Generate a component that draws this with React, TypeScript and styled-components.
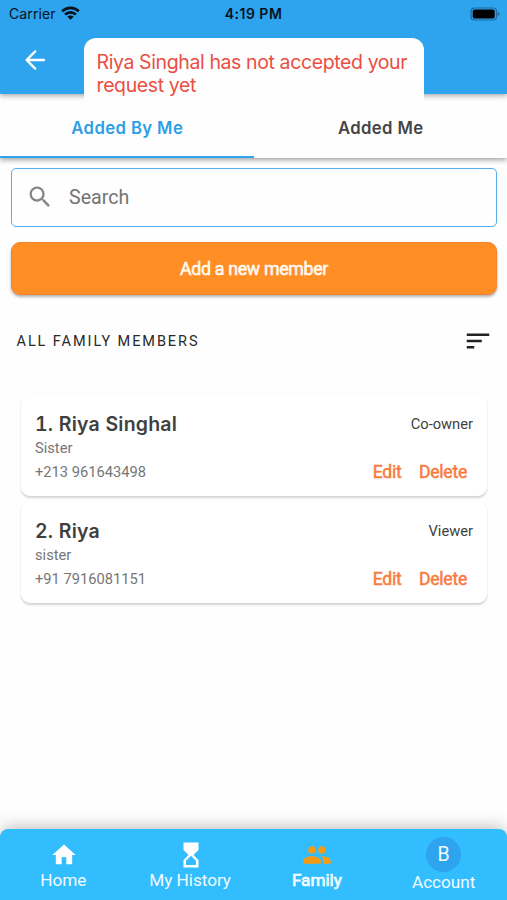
import React from "react";
import styled, { createGlobalStyle } from "styled-components";
import { MdHome, MdHourglassTop, MdSearch, MdSort } from "react-icons/md";

const GlobalStyle = createGlobalStyle`
  * { box-sizing: border-box; }
  body { margin: 0; background: #fefefe; }
  button { border: 0; padding: 0; background: none; font: inherit; color: inherit; letter-spacing: inherit; }
`;

const Screen = styled.div`
  position: relative;
  width: 507px;
  height: 900px;
  display: flex;
  flex-direction: column;
  overflow: hidden;
  background: #fefefe;
  font-family: Roboto, sans-serif;
  white-space: nowrap;
`;

const Header = styled.header`
  position: relative;
  z-index: 2;
  flex: none;
  height: 94px;
  background: #2ea3ee;
  box-shadow: 0 2px 5px rgba(0, 0, 0, 0.32);
`;

const StatusBar = styled.div`
  display: grid;
  grid-template-columns: 1fr auto 1fr;
  align-items: center;
  height: 28px;
  padding: 0 7px 0 9px;
  font-family: Inter, sans-serif;
  font-size: 14px;
  line-height: 28px;
  color: #06121c;
`;

const Carrier = styled.div`
  display: flex;
  align-items: center;
  gap: 5.5px;
  letter-spacing: 0.12px;
  svg { margin-top: -2px; }
`;

const Clock = styled.div`
  font-weight: 600;
  letter-spacing: 0.5px;
  margin-right: 2px;
`;

const BatterySlot = styled.div`
  display: flex;
  justify-content: flex-end;
`;

const BackButton = styled.button`
  display: flex;
  margin: 20px 0 0 24px;
`;

const Toast = styled.div`
  position: absolute;
  z-index: 3;
  left: 84px;
  top: 37.5px;
  width: 340px;
  height: 65px;
  padding: 13.5px 0 0 12.5px;
  border-radius: 12px 12px 0 0;
  background: #fefefe;
  color: #ea4e43;
  font-family: Inter, sans-serif;
  font-size: 19.5px;
  line-height: 23px;
  letter-spacing: -0.39px;
`;

const Tabs = styled.nav`
  position: relative;
  z-index: 1;
  flex: none;
  display: grid;
  grid-template-columns: 1fr 1fr;
  height: 64px;
  background: #fefefe;
  box-shadow: 0 2px 5px rgba(0, 0, 0, 0.36);
`;

const Tab = styled.button<{ $active?: boolean }>`
  padding: 6px 0 0 1px;
  border-bottom: 2.5px solid ${(p) => (p.$active ? "#2ea3ee" : "transparent")};
  color: ${(p) => (p.$active ? "#2c9fe6" : "#454545")};
  font-family: Inter, sans-serif;
  font-size: 16.7px;
  font-weight: 600;
  letter-spacing: 0.4px;
`;

const Content = styled.main`
  flex: 1;
  display: flex;
  flex-direction: column;
  padding: 10px 10px 0 11px;
`;

const SearchBox = styled.label`
  display: flex;
  align-items: center;
  gap: 15px;
  height: 59px;
  padding: 0 0 1px 14px;
  border: 1.5px solid #55adee;
  border-radius: 5px;
  color: #747474;
  font-size: 19.6px;
  svg { color: #858585; }
`;

const AddButton = styled.button`
  height: 53px;
  margin-top: 15px;
  border-radius: 9px;
  background: #ff8e25;
  border: 1px solid #f58332;
  box-shadow: 0 2px 3px rgba(0, 0, 0, 0.3);
  color: #fff8ee;
  font-size: 17.8px;
  letter-spacing: -0.32px;
  -webkit-text-stroke: 0.6px currentColor;
`;

const SectionHeader = styled.div`
  display: flex;
  align-items: center;
  justify-content: space-between;
  height: 32px;
  margin: 30px 4px 0 5.5px;
`;

const SectionTitle = styled.h2`
  margin: 0;
  color: #292929;
  font-size: 14.5px;
  font-weight: 400;
  letter-spacing: 1.92px;
`;

const MemberList = styled.div`
  display: flex;
  flex-direction: column;
  gap: 6px;
  margin: 38px 10px 0;
`;

const MemberCard = styled.article`
  display: grid;
  grid-template-columns: 1fr auto;
  grid-template-rows: 26px 22px 26px;
  align-items: center;
  height: 101px;
  padding: 16px 14px 0 14px;
  border-radius: 9px;
  background: #fff;
  box-shadow: 0 1.5px 2px rgba(0, 0, 0, 0.17);
`;

const MemberName = styled.h3`
  margin: 0;
  color: #404040;
  font-family: Inter, sans-serif;
  font-size: 19.5px;
  font-weight: 600;
  font-variant-numeric: tabular-nums;
  letter-spacing: 0.22px;
`;

const Role = styled.span`
  color: #3e3e3e;
  font-size: 14.7px;
  text-align: right;
`;

const Detail = styled.span`
  grid-column: 1;
  color: #767676;
  font-size: 14.7px;
`;

const Actions = styled.div`
  display: flex;
  gap: 17.5px;
  padding: 0 6px 1px 0;
  color: #f77b42;
  font-size: 17.6px;
  letter-spacing: -0.25px;
  -webkit-text-stroke: 0.5px currentColor;
`;

const BottomNav = styled.nav`
  flex: none;
  display: grid;
  grid-template-columns: repeat(4, 1fr);
  height: 71px;
  border-radius: 8px 8px 0 0;
  background: #32bdff;
  box-shadow: 0 -4px 16px -2px rgba(40, 40, 30, 0.3);
`;

const NavItem = styled.button<{ $active?: boolean }>`
  display: flex;
  flex-direction: column;
  align-items: center;
  color: #f1fbff;
  font-size: 17.2px;
  letter-spacing: -0.05px;
  -webkit-text-stroke: ${(p) => (p.$active ? "0.7px currentColor" : "0")};
  line-height: 20px;
`;

const NavIcon = styled.span<{ $active?: boolean }>`
  display: flex;
  align-items: center;
  justify-content: center;
  height: 41px;
  padding: 11px 0 0 1px;
  color: ${(p) => (p.$active ? "#f79a13" : "#ffffff")};
`;

const Avatar = styled.span`
  display: flex;
  align-items: center;
  justify-content: center;
  width: 35px;
  height: 35px;
  margin: 8px 0 0;
  border-radius: 50%;
  background: #2ea3ee;
  font-size: 19.5px;
`;

const members = [
  { name: "1. Riya Singhal", relation: "Sister", phone: "+213 961643498", role: "Co-owner" },
  { name: "2. Riya", relation: "sister", phone: "+91 7916081151", role: "Viewer" },
];

const WifiIcon = () => (
  <svg width="19" height="14" viewBox="0 0 19 14" fill="none" stroke="#06121c">
    <path d="M1.2 5.3a11.8 11.8 0 0 1 16.6 0" strokeWidth="2.8" />
    <path d="M4.1 8.6a7.6 7.6 0 0 1 10.8 0" strokeWidth="2.6" />
    <path d="M9.5 13.8 6.4 10.7a4.3 4.3 0 0 1 6.2 0z" fill="#06121c" stroke="none" />
  </svg>
);

const BatteryIcon = () => (
  <svg width="30" height="14" viewBox="0 0 30 14">
    <rect x="1" y="1" width="25.5" height="12" rx="3.5" fill="none" stroke="#1c699b" strokeWidth="1.2" />
    <rect x="2.7" y="2.4" width="22" height="9.2" rx="2" fill="#000" />
    <path d="M27.7 5v4q1.8-.6 1.8-2t-1.8-2" fill="#1c699b" />
  </svg>
);

const BackIcon = () => (
  <svg width="24" height="24" viewBox="0 0 24 24" fill="none" stroke="#fff" strokeWidth="2.4" strokeLinecap="round" strokeLinejoin="round">
    <path d="M20 12H2.8M11.2 3.4 2.6 12l8.6 8.6" />
  </svg>
);

const FamilyIcon = () => (
  <svg width="30" height="30" viewBox="0 0 24 24" fill="currentColor" stroke="none">
    <circle cx="16" cy="8" r="3" />
    <circle cx="8" cy="8" r="3" />
    <path d="M8 13c-2.33 0-7 1.17-7 3.5V19h14v-2.5c0-2.33-4.67-3.5-7-3.5z" />
    <path d="M16 13c-.29 0-.62.02-.97.05 1.16.84 1.97 1.97 1.97 3.45V19h6v-2.5c0-2.33-4.67-3.5-7-3.5z" />
  </svg>
);

export default function App() {
  return (
    <Screen>
      <GlobalStyle />
      <Header>
        <StatusBar>
          <Carrier>Carrier <WifiIcon /></Carrier>
          <Clock>4:19 PM</Clock>
          <BatterySlot><BatteryIcon /></BatterySlot>
        </StatusBar>
        <BackButton aria-label="Back"><BackIcon /></BackButton>
      </Header>
      <Toast role="alert">
        Riya Singhal has not accepted your<br />request yet
      </Toast>
      <Tabs>
        <Tab $active>Added By Me</Tab>
        <Tab>Added Me</Tab>
      </Tabs>
      <Content>
        <SearchBox><MdSearch size={28} />Search</SearchBox>
        <AddButton>Add a new member</AddButton>
        <SectionHeader>
          <SectionTitle>ALL FAMILY MEMBERS</SectionTitle>
          <MdSort size={30} color="#222" />
        </SectionHeader>
        <MemberList>
          {members.map((m) => (
            <MemberCard key={m.name}>
              <MemberName>{m.name}</MemberName>
              <Role>{m.role}</Role>
              <Detail>{m.relation}</Detail>
              <Detail>{m.phone}</Detail>
              <Actions>
                <button>Edit</button>
                <button>Delete</button>
              </Actions>
            </MemberCard>
          ))}
        </MemberList>
      </Content>
      <BottomNav>
        <NavItem><NavIcon><MdHome size={28} /></NavIcon>Home</NavItem>
        <NavItem><NavIcon><MdHourglassTop size={30} /></NavIcon>My History</NavItem>
        <NavItem $active><NavIcon $active><FamilyIcon /></NavIcon>Family</NavItem>
        <NavItem><Avatar>B</Avatar>Account</NavItem>
      </BottomNav>
    </Screen>
  );
}
